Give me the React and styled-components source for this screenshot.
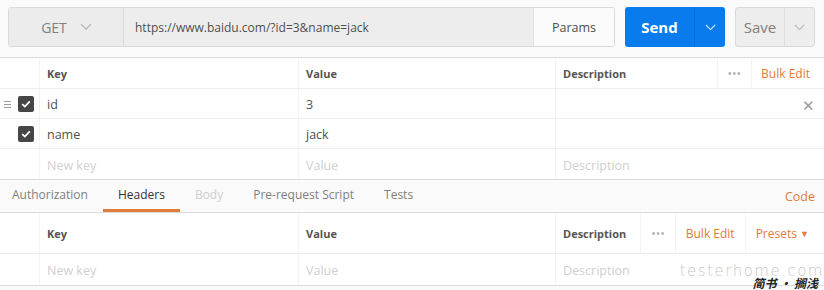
import React from "react"
import styled, { createGlobalStyle } from "styled-components"

const GlobalStyle = createGlobalStyle`
  html, body {
    margin: 0;
    padding: 0;
    background: #fafafa;
  }
  * {
    box-sizing: border-box;
  }
`

const orange = "#e07b39"

const Page = styled.div`
  position: relative;
  width: 824px;
  height: 290px;
  overflow: hidden;
  background: #fafafa;
  font-family: "Open Sans", "Noto Sans", sans-serif;
  color: #505050;
`

/* request bar */
const RequestBar = styled.div`
  display: flex;
  align-items: stretch;
  height: 58px;
  padding: 7px 9px 10px 8px;
  border-bottom: 1px solid #dcdcdc;
`

const UrlGroup = styled.div`
  display: flex;
  width: 607px;
  border: 1px solid #dadada;
  border-radius: 3px;
  overflow: hidden;
`

const Method = styled.div`
  display: flex;
  align-items: center;
  justify-content: center;
  gap: 13px;
  width: 115px;
  background: #ececec;
  border-right: 1px solid #dadada;
  color: #808080;
  font-size: 14px;
  padding-left: 1px;
`

const UrlInput = styled.div`
  flex: 1;
  display: flex;
  align-items: center;
  padding-left: 11px;
  background: #ededed;
  font-size: 12px;
  color: #505050;
`

const ParamsButton = styled.div`
  display: flex;
  align-items: center;
  justify-content: center;
  width: 81px;
  background: #fafafa;
  border-left: 1px solid #e2e2e2;
  font-size: 12.5px;
  color: #505050;
`

const SplitButton = styled.div`
  display: flex;
  margin-left: ${p => p.$gap}px;
  width: ${p => p.$width}px;
  border-radius: 3px;
  overflow: hidden;
  background: ${p => (p.$primary ? "#097bed" : "#ededed")};
  border: ${p => (p.$primary ? "none" : "1px solid #dadada")};
  color: ${p => (p.$primary ? "#fff" : "#808080")};
`

const SplitMain = styled.div`
  flex: 1;
  display: flex;
  align-items: center;
  justify-content: center;
  font-size: 15px;
  font-weight: ${p => (p.$bold ? 700 : 400)};
`

const SplitCaret = styled.div`
  display: flex;
  align-items: center;
  justify-content: center;
  width: ${p => p.$width}px;
  border-left: 1px solid ${p => (p.$primary ? "#0a6cd0" : "#dedede")};
`

const Chevron = ({ color = "#a0a0a0", size = 12 }) => (
  <svg width={size} height={size * 0.6} viewBox="0 0 12 7">
    <path d="M1 1l5 5 5-5" fill="none" stroke={color} strokeWidth="1.2" />
  </svg>
)

/* key / value tables */
const Table = styled.div`
  background: #fff;
  border-bottom: 1px solid #dcdcdc;
`

const Row = styled.div`
  display: grid;
  grid-template-columns: 40px 259px 257px 1fr;
  height: ${p => p.$height}px;
  border-bottom: ${p => (p.$last ? "none" : "1px solid #ececec")};
`

const Cell = styled.div`
  display: flex;
  align-items: center;
  padding-left: 7px;
  padding-top: ${p => (p.$head ? 0 : 2)}px;
  border-right: ${p => (p.$lastCol ? "none" : "1px solid #f4f4f4")};
  font-size: ${p => (p.$head ? "11px" : "12.5px")};
  font-weight: ${p => (p.$head ? 700 : 400)};
  color: ${p => (p.$head ? "#555" : p.$placeholder ? "#cfcfcf" : "#505050")};
`

const HandleCell = styled.div`
  display: flex;
  align-items: center;
  justify-content: flex-end;
  gap: 7px;
  padding-right: 5px;
  padding-top: 1px;
  border-right: 1px solid #f4f4f4;
`

const DescCell = styled(Cell)`
  justify-content: space-between;
  padding-right: 0;
`

const Actions = styled.div`
  display: flex;
  align-self: stretch;
`

const Action = styled.div`
  display: flex;
  align-items: center;
  padding: 0 ${p => p.$right ?? p.$pad}px 0 ${p => p.$pad}px;
  border-left: 1px solid #f4f4f4;
  font-size: 12px;
  font-weight: 400;
  color: ${p => (p.$muted ? "#b0b0b0" : orange)};
`

const Checkbox = styled.span`
  display: inline-flex;
  align-items: center;
  justify-content: center;
  width: 16px;
  height: 16px;
  border-radius: 2px;
  background: #464646;
`

const Handle = styled.span`
  display: flex;
  flex-direction: column;
  gap: 2px;
  width: 7px;
  span {
    height: 1px;
    background: ${p => (p.$hidden ? "transparent" : "#9a9a9a")};
  }
`

const Remove = styled.span`
  margin-right: 9px;
  color: #9a9a9a;
  font-size: 15px;
  font-weight: 300;
`

/* tabs */
const TabBar = styled.div`
  display: flex;
  align-items: stretch;
  height: 33px;
  border-bottom: 1px solid #dcdcdc;
  background: #fafafa;
`

const Tab = styled.div`
  display: flex;
  align-items: center;
  padding: 0 15px 1px;
  &:first-child {
    padding-left: 12px;
  }
  font-size: 12px;
  color: ${p => (p.$active ? "#333" : p.$disabled ? "#cfcfcf" : "#808080")};
  border-bottom: 3px solid ${p => (p.$active ? orange : "transparent")};
`

const CodeLink = styled.div`
  margin-left: auto;
  display: flex;
  align-items: center;
  padding: 1px 9px 0 0;
  font-size: 12.5px;
  color: ${orange};
`

const Watermark = styled.div`
  position: absolute;
  right: ${p => p.$right}px;
  bottom: ${p => p.$bottom}px;
  line-height: 1;
  font-family: ${p => (p.$cjk ? '"Noto Sans CJK SC", sans-serif' : '"DejaVu Sans", sans-serif')};
  font-size: ${p => p.$size}px;
  font-style: ${p => (p.$cjk ? "italic" : "normal")};
  font-weight: ${p => (p.$cjk ? 700 : 300)};
  color: ${p => (p.$cjk ? "#222" : "#c8c8c8")};
  letter-spacing: ${p => (p.$cjk ? "0" : "1.5px")};
`

const Check = () => (
  <svg width="10" height="8" viewBox="0 0 10 8">
    <path d="M1.2 4.2l2.6 2.4L8.8 1.4" fill="none" stroke="#fff" strokeWidth="1.8" />
  </svg>
)

const params = [
  { key: "id", value: "3", handle: true, remove: true },
  { key: "name", value: "jack" },
]

export default function App() {
  return (
    <>
      <GlobalStyle />
      <Page>
        <RequestBar>
          <UrlGroup>
            <Method>
              GET <Chevron color="#b0b0b0" />
            </Method>
            <UrlInput>https://www.baidu.com/?id=3&amp;name=jack</UrlInput>
            <ParamsButton>Params</ParamsButton>
          </UrlGroup>
          <SplitButton $primary $gap={10} $width={100}>
            <SplitMain $bold>Send</SplitMain>
            <SplitCaret $primary $width={31}>
              <Chevron color="#cfe3fb" size={11} />
            </SplitCaret>
          </SplitButton>
          <SplitButton $gap={10} $width={80}>
            <SplitMain>Save</SplitMain>
            <SplitCaret $width={30}>
              <Chevron color="#b8b8b8" size={11} />
            </SplitCaret>
          </SplitButton>
        </RequestBar>

        <Table>
          <Row $height={31}>
            <HandleCell />
            <Cell $head>Key</Cell>
            <Cell $head>Value</Cell>
            <DescCell $head $lastCol>
              Description
              <Actions>
                <Action $muted $pad={10}>•••</Action>
                <Action $pad={9} $right={14}>Bulk Edit</Action>
              </Actions>
            </DescCell>
          </Row>
          {params.map(p => (
            <Row key={p.key} $height={30}>
              <HandleCell>
                <Handle $hidden={!p.handle}>
                  <span />
                  <span />
                  <span />
                </Handle>
                <Checkbox>
                  <Check />
                </Checkbox>
              </HandleCell>
              <Cell>{p.key}</Cell>
              <Cell>{p.value}</Cell>
              <DescCell $lastCol>
                <span />
                {p.remove && <Remove>✕</Remove>}
              </DescCell>
            </Row>
          ))}
          <Row $height={30} $last>
            <HandleCell />
            <Cell $placeholder>New key</Cell>
            <Cell $placeholder>Value</Cell>
            <Cell $placeholder $lastCol>Description</Cell>
          </Row>
        </Table>

        <TabBar>
          <Tab>Authorization</Tab>
          <Tab $active>Headers</Tab>
          <Tab $disabled>Body</Tab>
          <Tab>Pre-request Script</Tab>
          <Tab>Tests</Tab>
          <CodeLink>Code</CodeLink>
        </TabBar>

        <Table>
          <Row $height={41}>
            <HandleCell />
            <Cell $head>Key</Cell>
            <Cell $head>Value</Cell>
            <DescCell $head $lastCol>
              Description
              <Actions>
                <Action $muted $pad={10}>•••</Action>
                <Action $pad={10}>Bulk Edit</Action>
                <Action $pad={10} $right={15}>
                  Presets&nbsp;<span style={{ fontSize: 9 }}>▼</span>
                </Action>
              </Actions>
            </DescCell>
          </Row>
          <Row $height={31} $last>
            <HandleCell />
            <Cell $placeholder>New key</Cell>
            <Cell $placeholder>Value</Cell>
            <Cell $placeholder $lastCol>Description</Cell>
          </Row>
        </Table>

        <Watermark $right={0} $bottom={11} $size={15}>testerhome.com</Watermark>
        <Watermark $cjk $right={6} $bottom={1} $size={12}>简书 • 搁浅</Watermark>
      </Page>
    </>
  )
}
